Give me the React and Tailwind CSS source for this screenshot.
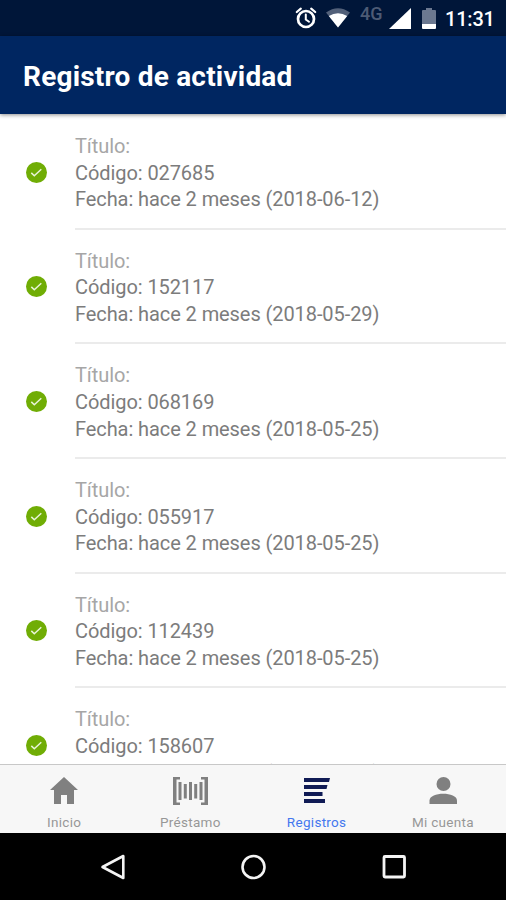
import React from 'react'

const records = [
  { code: '027685', date: '2018-06-12' },
  { code: '152117', date: '2018-05-29' },
  { code: '068169', date: '2018-05-25' },
  { code: '055917', date: '2018-05-25' },
  { code: '112439', date: '2018-05-25' },
  { code: '158607', date: '2018-05-25' },
]

function StatusBar() {
  return (
    <div className="h-9 shrink-0 bg-[#001639] flex items-center justify-end text-white">
      <svg className="w-[22px] h-[22px] mr-[9px]" viewBox="0 0 22 22" fill="none" stroke="#fff" strokeLinecap="round">
        <circle cx="11" cy="12" r="8" strokeWidth="2.7" />
        <path d="M10.8 7.500v5l3.200 2.200" strokeWidth="2" />
        <path d="M1.800 5l4-3.300M20.200 5l-4-3.300" strokeWidth="2.2" />
      </svg>
      <svg className="w-6 h-5 mr-[10px]" viewBox="0 0 24 20">
        <path d="M0 4.500Q12-4 24 4.500L12 19.500z" fill="#526079" />
        <path d="M2.800 8Q12 2.500 21.200 8L12 19.500z" fill="#fff" />
      </svg>
      <span className="w-6 text-[18px] leading-5 font-medium text-[#4d5b75] mb-[9px] mr-[5px]">4G</span>
      <svg className="w-[22px] h-[21px] mr-[11px]" viewBox="0 0 22 21">
        <path d="M22 0v21H0z" fill="#fff" />
      </svg>
      <svg className="w-[14px] h-[21px] mr-[9px]" viewBox="0 0 14 21">
        <path d="M4 0h6v2h3q1 0 1 1v13H0V3q0-1 1-1h3z" fill="#6b7890" />
        <path d="M0 16h14v4q0 1-1 1H1q-1 0-1-1z" fill="#fff" />
      </svg>
      <span className="w-[50px] mr-[11px] pt-0.5 text-[20px] leading-6 font-medium tracking-[-0.2px] whitespace-nowrap">11:31</span>
    </div>
  )
}

function RecordRow({ code, date }) {
  return (
    <div className="h-[114.67px] shrink-0 flex">
      <div className="w-[75px] flex items-center pl-[26px]">
        <svg className="w-[21px] h-[21px]" viewBox="0 0 21 21">
          <circle cx="10.5" cy="10.5" r="10.5" fill="#70ad05" />
          <path d="M5.300 10.900l3 2.900 7-6.600" fill="none" stroke="#e9f4d8" strokeWidth="1.5" />
        </svg>
      </div>
      <div className="flex-1 border-b-2 border-[#ebebeb] pt-[18px] text-[20px] leading-[26.7px] tracking-[-0.08px] text-[#7c7c7c] whitespace-nowrap">
        <p className="text-[#a6a6a6]">Título:</p>
        <p>Código: {code}</p>
        <p>Fecha: hace 2 meses ({date})</p>
      </div>
    </div>
  )
}

const tabs = [
  {
    label: 'Inicio',
    icon: <path d="M14 0l14 13h-4v14h-7v-9h-6v9H4V13H0z" fill="#808080" />,
  },
  {
    label: 'Préstamo',
    wide: true,
    icon: (
      <g fill="#808080">
        <path d="M7 0H0v28h7v-2.500H3.500V2.500H7zM28 0h7v28h-7v-2.500h3.500v-23H28z" />
        <path d="M5.500 5h3v18h-3zM10.800 7h3v14.500h-3zM16 5h3v18h-3zM21.200 7h3v14.500h-3zM26.500 5h3v18h-3z" />
      </g>
    ),
  },
  {
    label: 'Registros',
    active: true,
    icon: <path d="M1 1h26l-1 4H1zM1 8h23.500l-1 4H1zM1 15h18.500v4H1zM1 22h21v4H1z" fill="#101b55" />,
  },
  {
    label: 'Mi cuenta',
    icon: (
      <g fill="#808080">
        <circle cx="14.500" cy="7" r="7" />
        <path d="M0.500 27v-3.500C0.500 14.500 28 14.500 28 23.500V27z" />
      </g>
    ),
  },
]

function TabBar() {
  return (
    <div className="h-[69px] shrink-0 bg-[#f7f7f7] border-t border-[#c8c8c8] flex pl-px">
      {tabs.map((tab) => (
        <div key={tab.label} className="flex-1 flex flex-col items-center pt-3">
          <svg
            className={tab.wide ? 'w-[35px] h-7' : 'w-7 h-7'}
            viewBox={tab.wide ? '0 0 35 28' : '0 0 28 28'}
          >
            {tab.icon}
          </svg>
          <span
            className={`mt-[9px] text-[13.5px] leading-4 tracking-[0.3px] ${tab.active ? 'text-[#4478ef]' : 'text-[#979797]'}`}
          >
            {tab.label}
          </span>
        </div>
      ))}
    </div>
  )
}

function NavigationBar() {
  return (
    <div className="h-[67px] shrink-0 bg-black flex items-center justify-between pl-[100px] pr-[98px]">
      <svg className="w-7 h-7" viewBox="0 0 28 28" fill="none" stroke="#f4f4f4" strokeWidth="2.6">
        <path d="M23.300 3v22L2.500 14z" strokeLinejoin="round" />
      </svg>
      <svg className="w-7 h-7" viewBox="0 0 28 28" fill="none" stroke="#f4f4f4" strokeWidth="2.6">
        <circle cx="13.500" cy="14" r="11" />
      </svg>
      <svg className="w-7 h-7" viewBox="0 0 28 28" fill="none" stroke="#f4f4f4" strokeWidth="2.8">
        <rect x="4" y="3.500" width="20.500" height="20.500" rx="1" />
      </svg>
    </div>
  )
}

export default function App() {
  return (
    <div className="w-[506px] h-[900px] flex flex-col overflow-hidden bg-white font-['Roboto',sans-serif]">
      <StatusBar />
      <header className="relative h-[78px] shrink-0 bg-[#002661] flex items-center pl-[23px] pt-1 shadow-[0_1px_4px_rgba(0,0,0,0.45)]">
        <h1 className="text-[28px] leading-8 font-bold tracking-[0.2px] text-white whitespace-nowrap">Registro de actividad</h1>
      </header>
      <main className="flex-1 min-h-0 overflow-hidden flex flex-col pt-[0.9px]">
        {records.map((record) => (
          <RecordRow key={record.code} code={record.code} date={record.date} />
        ))}
      </main>
      <TabBar />
      <NavigationBar />
    </div>
  )
}
